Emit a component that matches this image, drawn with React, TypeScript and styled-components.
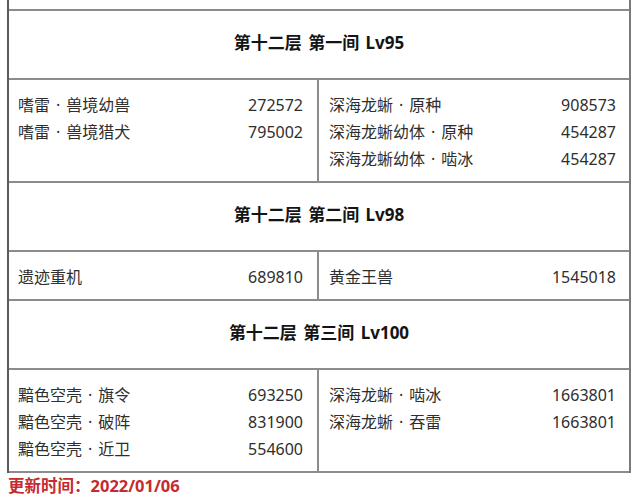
import React from "react";
import styled, { createGlobalStyle } from "styled-components";

const Global = createGlobalStyle`
  html, body { margin: 0; padding: 0; background: #ffffff; }
  body { font-family: "Noto Sans", "Noto Sans CJK SC", sans-serif; }
`;

const Page = styled.div`
  width: 640px;
  height: 502px;
  overflow: hidden;
  padding-left: 7px;
  box-sizing: border-box;
`;

const Table = styled.div`
  width: 624px;
  border-left: 2px solid #5a5a5a;
  border-right: 2px solid #7a7a7a;
  box-sizing: border-box;
`;

const Stub = styled.div`
  height: 9px;
`;

const Title = styled.div`
  height: 69px;
  box-sizing: border-box;
  border-top: 2px solid #8c8c8c;
  display: flex;
  align-items: center;
  justify-content: center;
  padding-bottom: 3px;
  font-size: 17px;
  line-height: 22px;
  font-weight: 700;
  color: #141414;
  word-spacing: 2px;
`;

const Grid = styled.div`
  display: grid;
  grid-template-columns: 1fr 1fr;
  border-top: 2px solid #8c8c8c;
`;

const Column = styled.div<{ $side: "left" | "right" }>`
  padding: 11px ${(p) => (p.$side === "left" ? "14px" : "13px")} 9px
    ${(p) => (p.$side === "left" ? "9px" : "10px")};
  border-right: ${(p) => (p.$side === "left" ? "2px solid #8c8c8c" : "none")};
  display: flex;
  flex-direction: column;
`;

const Row = styled.div`
  display: flex;
  justify-content: space-between;
  align-items: center;
  height: 27px;
  font-size: 16px;
  line-height: 20px;
  color: #2e2e2e;
`;

const Name = styled.span``;
const Dot = styled.span`
  margin: 0 6px;
`;
const Hp = styled.span``;

const Bottom = styled.div`
  border-top: 2px solid #8c8c8c;
`;

const Footer = styled.div`
  padding: 3px 0 0 1px;
  font-size: 16.5px;
  line-height: 20px;
  font-weight: 700;
  color: #c42a2f;
`;

type Enemy = [string, string];
type Chamber = { title: string; left: Enemy[]; right: Enemy[] };

const chambers: Chamber[] = [
  {
    title: "第十二层 第一间 Lv95",
    left: [
      ["嗜雷·兽境幼兽", "272572"],
      ["嗜雷·兽境猎犬", "795002"],
    ],
    right: [
      ["深海龙蜥·原种", "908573"],
      ["深海龙蜥幼体·原种", "454287"],
      ["深海龙蜥幼体·啮冰", "454287"],
    ],
  },
  {
    title: "第十二层 第二间 Lv98",
    left: [["遗迹重机", "689810"]],
    right: [["黄金王兽", "1545018"]],
  },
  {
    title: "第十二层 第三间 Lv100",
    left: [
      ["黯色空壳·旗令", "693250"],
      ["黯色空壳·破阵", "831900"],
      ["黯色空壳·近卫", "554600"],
    ],
    right: [
      ["深海龙蜥·啮冰", "1663801"],
      ["深海龙蜥·吞雷", "1663801"],
    ],
  },
];

const EnemyName = ({ text }: { text: string }) => {
  const parts = text.split("·");
  return (
    <Name>
      {parts.map((p, i) => (
        <React.Fragment key={i}>
          {i > 0 && <Dot>·</Dot>}
          {p}
        </React.Fragment>
      ))}
    </Name>
  );
};

const EnemyList = ({ items, side }: { items: Enemy[]; side: "left" | "right" }) => (
  <Column $side={side}>
    {items.map(([n, h], i) => (
      <Row key={i}>
        <EnemyName text={n} />
        <Hp>{h}</Hp>
      </Row>
    ))}
  </Column>
);

export default function App() {
  return (
    <>
      <Global />
      <Page>
        <Table>
          <Stub />
          {chambers.map((c, i) => (
            <React.Fragment key={i}>
              <Title>{c.title}</Title>
              <Grid>
                <EnemyList items={c.left} side="left" />
                <EnemyList items={c.right} side="right" />
              </Grid>
            </React.Fragment>
          ))}
          <Bottom />
        </Table>
        <Footer>更新时间：2022/01/06</Footer>
      </Page>
    </>
  );
}
